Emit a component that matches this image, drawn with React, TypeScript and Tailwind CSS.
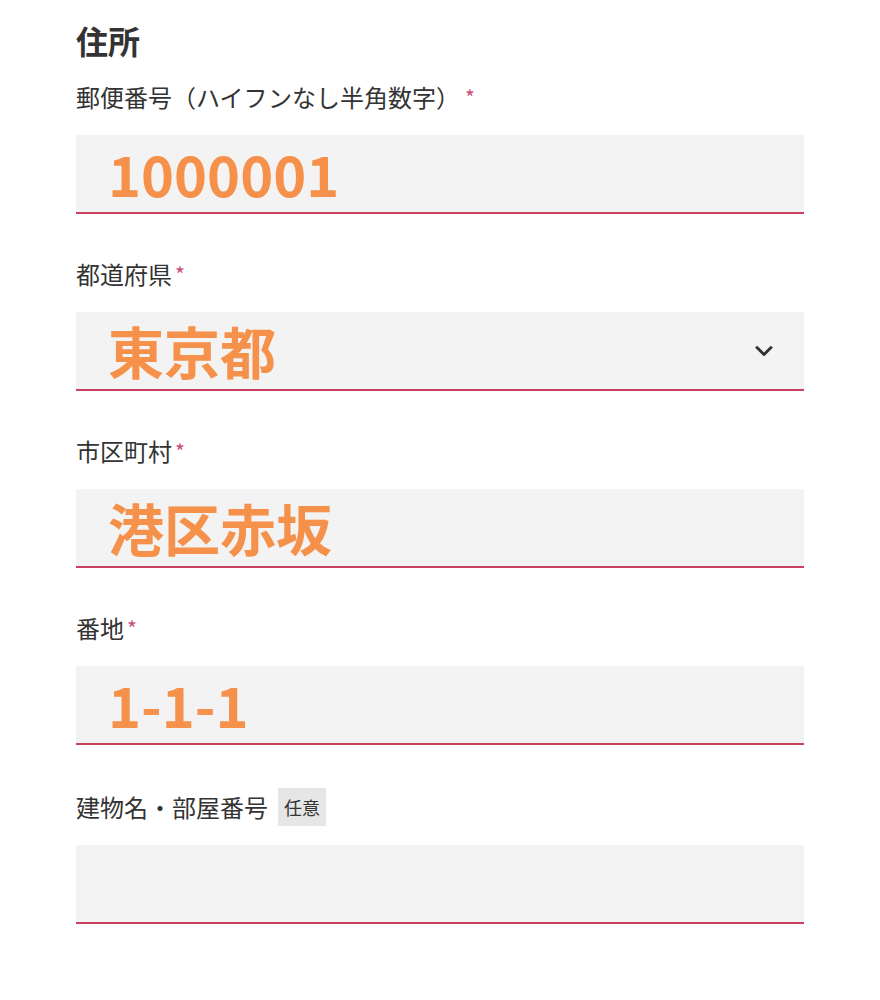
import { ChevronDown } from 'lucide-react';

const fields = [
  { label: '郵便番号（ハイフンなし半角数字）', value: '1000001', required: true, gap: true },
  { label: '都道府県', value: '東京都', required: true, select: true },
  { label: '市区町村', value: '港区赤坂', required: true },
  { label: '番地', value: '1-1-1', required: true },
  { label: '建物名・部屋番号', value: '', optional: true },
];

const App = () => {
  return (
    <div
      className="min-h-screen bg-white px-[76px] pt-[20px] text-[#333]"
      style={{ fontFamily: '"Noto Sans CJK JP", "Noto Sans", sans-serif' }}
    >
      {/* Section Header */}
      <h2 className="text-[32px] leading-[40px] font-bold">住所</h2>

      <div className="mt-[21px] flex flex-col gap-[44px]">
        {fields.map((field) => (
          <div key={field.label} className={field.optional ? 'mt-[2px]' : ''}>
            <div className="flex h-8 items-center text-[24px] leading-8">
              <span>{field.label}</span>
              {field.required && (
                <span className={`text-[21px] leading-none text-[#cc4a78] ${field.gap ? 'ml-[5px]' : 'ml-[3px]'}`}>*</span>
              )}
              {field.optional && (
                <span className="ml-[10px] flex h-[38px] items-center bg-[#e6e6e6] px-[6px] text-[18px]">
                  任意
                </span>
              )}
            </div>
            <div className="relative mt-[22px] flex h-[79px] items-center border-b-2 border-[#c8415e] bg-[#f3f3f3] pl-[32px]">
              <span className="-mt-[2px] text-[56px] font-bold leading-none text-[#f5914a]">{field.value}</span>
              {field.select && (
                <ChevronDown className="absolute right-[26px] top-1/2 h-7 w-7 -translate-y-1/2 text-[#333]" strokeWidth={2.5} />
              )}
            </div>
          </div>
        ))}
      </div>
    </div>
  );
};

export default App;
